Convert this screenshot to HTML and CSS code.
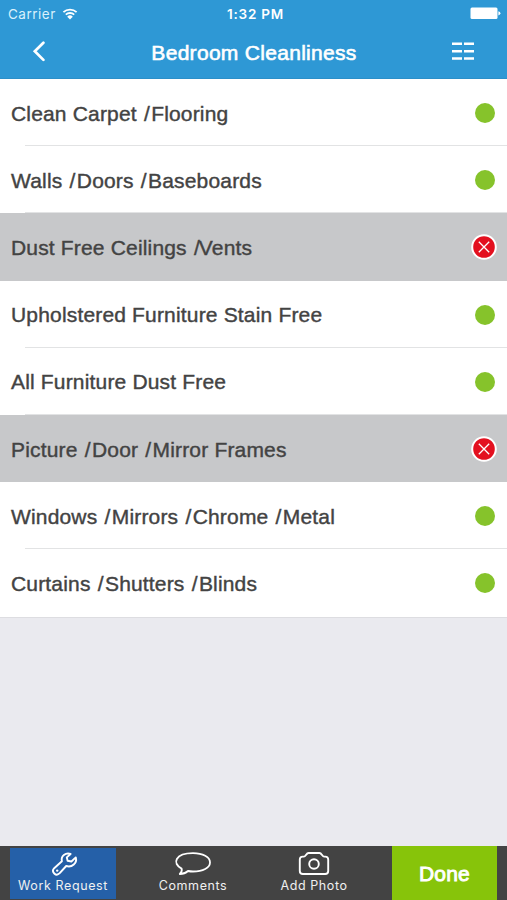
FILE: index.html
```html
<!DOCTYPE html>
<html lang="en">

<head>
    <meta charset="UTF-8">
    <meta name="viewport" content="width=device-width, initial-scale=1.0">
    <title>Bedroom Cleanliness</title>
    <link rel="stylesheet" href="styles.css">
</head>

<body>
    <div class="header">
        <div class="status-bar">
            <div class="carrier">
                <span>Carrier</span>
                <svg class="wifi" viewBox="0 0 16 12" width="16" height="12">
                    <path d="M1.4 4.2a9.6 9.6 0 0 1 13.2 0M3.8 6.7a6.1 6.1 0 0 1 8.4 0" fill="none" stroke="#fff" stroke-width="1.8" />
                    <path d="M8 11.4L5.2 8.7a4 4 0 0 1 5.6 0z" fill="#fff" />
                </svg>
            </div>
            <div class="time">1:32 PM</div>
            <div class="battery">
                <svg viewBox="0 0 31 13" width="31" height="13">
                    <rect x="0.5" y="0.6" width="27" height="11.4" rx="1.5" fill="#fff" />
                    <path d="M28.4 4.2q2 .6 2 2.1t-2 2.1z" fill="#fff" />
                </svg>
            </div>
        </div>
        <div class="nav-bar">
            <button class="nav-btn">
                <svg viewBox="0 0 14 22" width="14" height="22">
                    <path d="M11.4 1.7L2.8 10.3l8.6 8.6" fill="none" stroke="#fff" stroke-width="2.7" stroke-linecap="round" />
                </svg>
            </button>
            <h1>Bedroom Cleanliness</h1>
            <button class="nav-btn">
                <svg viewBox="0 0 22 20" width="22" height="20">
                    <path d="M0 1.7h10M12 1.7h10M0 9.2h10M12 9.2h10M0 16.6h10M12 16.6h10" stroke="#fff" stroke-width="2.5" />
                </svg>
            </button>
        </div>
    </div>

    <ul class="checklist">
        <li class="item"><span>Clean Carpet <span class="slash">/</span>Flooring</span><i class="dot"></i></li>
        <li class="item"><span>Walls <span class="slash">/</span>Doors <span class="slash">/</span>Baseboards</span><i class="dot"></i></li>
        <li class="item failed">
            <span>Dust Free Ceilings <span class="slash tight">/</span>Vents</span>
            <svg class="cross" viewBox="0 0 26 26" width="26" height="26">
                <circle cx="13" cy="13" r="11.8" fill="#e3101f" stroke="#fff" stroke-width="2" />
                <path d="M7.8 7.8l10.4 10.4M18.2 7.8l-10.4 10.4" stroke="#fff" stroke-width="1.3" />
            </svg>
        </li>
        <li class="item"><span>Upholstered Furniture Stain Free</span><i class="dot"></i></li>
        <li class="item"><span>All Furniture Dust Free</span><i class="dot"></i></li>
        <li class="item failed">
            <span>Picture <span class="slash">/</span>Door <span class="slash">/</span>Mirror Frames</span>
            <svg class="cross" viewBox="0 0 26 26" width="26" height="26">
                <circle cx="13" cy="13" r="11.8" fill="#e3101f" stroke="#fff" stroke-width="2" />
                <path d="M7.8 7.8l10.4 10.4M18.2 7.8l-10.4 10.4" stroke="#fff" stroke-width="1.3" />
            </svg>
        </li>
        <li class="item"><span>Windows <span class="slash">/</span>Mirrors <span class="slash">/</span>Chrome <span class="slash">/</span>Metal</span><i class="dot"></i></li>
        <li class="item"><span>Curtains <span class="slash">/</span>Shutters <span class="slash">/</span>Blinds</span><i class="dot"></i></li>
    </ul>

    <div class="toolbar">
        <button class="tool work">
            <svg viewBox="0 0 30 28" width="30" height="28">
                <path d="M20.6 4C15.6 2.4 10.6 6 11.9 11.2L4.2 18.2c-3.4 3.6 1.8 8.8 5.5 5L16.2 16c5.8 1.8 11.2-3 9.6-8.6l-4.4 4.1-3.8-.7-.8-3.4z" fill="none" stroke="#fff" stroke-width="1.9" stroke-linejoin="round" />
                <circle cx="7.2" cy="20.6" r="1.2" fill="#fff" />
            </svg>
            <span>Work Request</span>
        </button>
        <button class="tool comments">
            <svg viewBox="0 0 38 28" width="38" height="28">
                <path d="M7.6 18.6C-2.2 13.4 1 3.2 19 3.2c9.900 0 17 3.900 17 9.200S28.900 21.500 19 21.500c-2 0-3.600-.2-5-.5-2.200 2-5 3-8.200 3 1.700-1.500 2.400-3.400 1.800-5.400z" fill="none" stroke="#fff" stroke-width="1.8" stroke-linejoin="round" />
            </svg>
            <span>Comments</span>
        </button>
        <button class="tool photo">
            <svg viewBox="0 0 32 28" width="32" height="28">
                <path d="M4.7 6.6h1.2c1.8 0 2.4-3.6 4.6-3.6h11c2.2 0 2.8 3.6 4.6 3.6h1.2q2.9 0 2.9 3V21q0 3-3 3H4.8q-3 0-3-3V9.6q0-3 2.9-3z" fill="none" stroke="#fff" stroke-width="1.9" />
                <circle cx="16" cy="14" r="4.8" fill="none" stroke="#fff" stroke-width="1.9" />
            </svg>
            <span>Add Photo</span>
        </button>
        <button class="done">Done</button>
    </div>
</body>

</html>
```
FILE: styles.css
```css
* {
    box-sizing: border-box;
}

body, html {
    margin: 0;
    padding: 0;
    height: 100%;
}

body {
    display: flex;
    flex-direction: column;
    font-family: "Liberation Sans", Arial, sans-serif;
    background-color: #eaeaef;
    color: #434343;
    overflow: hidden;
}

button {
    padding: 0;
    border: none;
    background: none;
    color: white;
    cursor: pointer;
}

svg {
    display: block;
    flex: none;
}

/* Header */
.header {
    height: 79px;
    flex: none;
    background-color: #2e98d5;
    border-bottom: 1px solid #2b8fc9;
    color: white;
}

.status-bar {
    height: 27px;
    padding: 0 6px 0 8px;
    display: grid;
    grid-template-columns: 1fr auto 1fr;
    align-items: center;
    font-family: Inter, sans-serif;
    font-size: 13.5px;
}

.carrier {
    display: flex;
    align-items: center;
    gap: 6px;
    color: #d9f1fc;
    letter-spacing: 0.5px;
}

.time {
    padding-left: 2px;
    font-weight: 600;
    letter-spacing: 0.8px;
}

.battery {
    justify-self: end;
}

.nav-bar {
    height: 50px;
    padding: 0 33px 0 32px;
    display: flex;
    justify-content: space-between;
    align-items: center;
}

.nav-bar h1 {
    margin: 0;
    padding: 1px 0 0 2px;
    font-size: 21px;
    font-weight: normal;
    letter-spacing: 0.3px;
    -webkit-text-stroke: 0.6px white;
}

.nav-btn {
    width: 22px;
}

/* Checklist */
.checklist {
    flex: none;
    margin: 0;
    padding: 0;
    list-style: none;
    background-color: white;
    border-bottom: 1px solid #dddde1;
}

.item {
    height: 67.2px;
    padding: 1px 12px 0 11px;
    display: flex;
    justify-content: space-between;
    align-items: center;
    font-size: 21px;
    letter-spacing: 0.17px;
    white-space: nowrap;
    -webkit-text-stroke: 0.4px #434343;
    background: linear-gradient(#e2e3e4, #e2e3e4) 25px 100% / 100% 1px no-repeat;
}

.item > span {
    padding-top: 1px;
}

.item:last-child {
    background: none;
}

.item.failed {
    padding-right: 10px;
    background: #c7c8ca;
}

.slash {
    margin: 0 1.2px;
}

.slash.tight {
    margin-right: -1.2px;
}

.dot {
    width: 20px;
    height: 20px;
    border-radius: 50%;
    background-color: #86c32b;
}

/* Bottom toolbar */
.toolbar {
    height: 54px;
    flex: none;
    margin-top: auto;
    padding-left: 10px;
    display: flex;
    background-color: #434343;
}

.tool {
    height: 51px;
    margin-top: 2px;
    display: flex;
    flex-direction: column;
    align-items: center;
    font-family: Inter, sans-serif;
    font-size: 12.5px;
    letter-spacing: 0.6px;
    line-height: 16px;
    color: #f0f0f0;
}

.tool svg {
    margin-top: 2px;
}

.work {
    width: 106px;
    background-color: #2560a8;
}

.work svg {
    margin-left: 3px;
}

.comments {
    width: 106px;
    margin-left: 24px;
}

.photo {
    width: 106px;
    margin-left: 15px;
}

.done {
    width: 105px;
    height: 54px;
    margin-left: auto;
    margin-right: 10px;
    padding-top: 2px;
    background-color: #87c40a;
    font-family: "Liberation Sans", Arial, sans-serif;
    font-size: 21px;
    letter-spacing: 0.2px;
    -webkit-text-stroke: 0.9px white;
}
```
